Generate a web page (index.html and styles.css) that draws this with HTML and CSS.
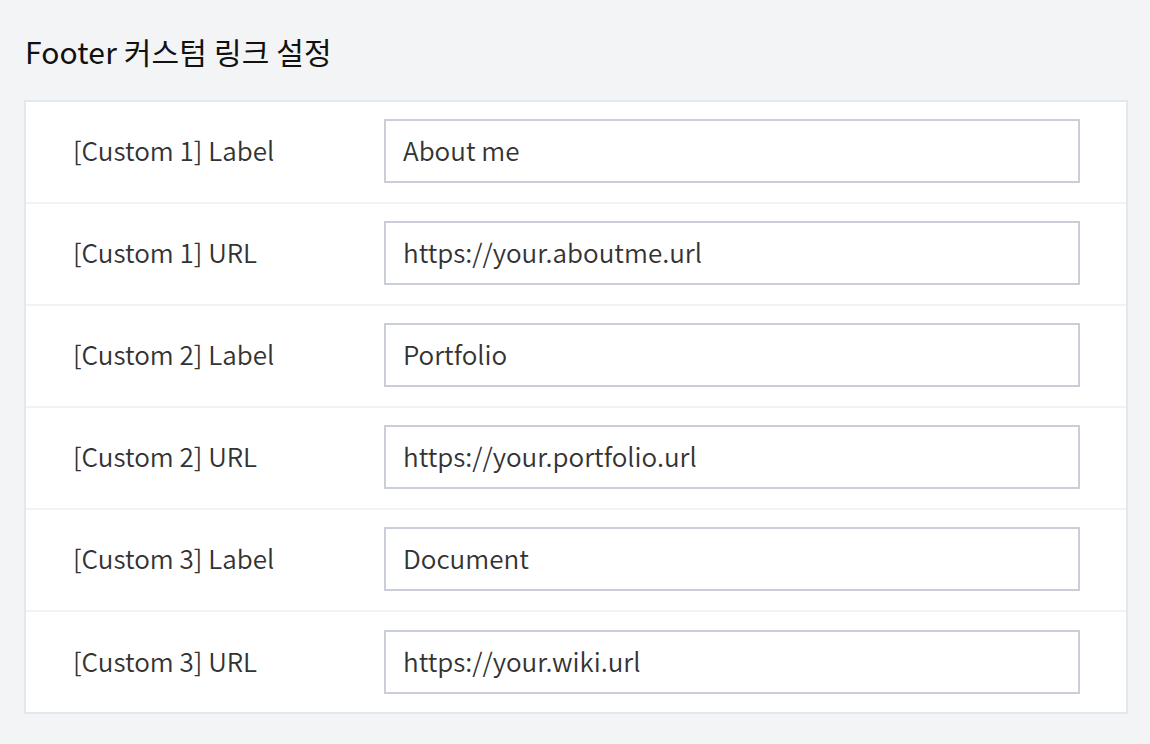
FILE: index.html
```html
<!DOCTYPE html>
<html lang="en">
<head>
<meta charset="utf-8">
<link rel="stylesheet" href="styles.css">
</head>
<body>
<div class="page">
  <h2 class="title">Footer 커스텀 링크 설정</h2>
  <div class="card">
    <div class="row"><div class="label">[Custom 1] Label</div><div class="field">About me</div></div>
    <div class="row"><div class="label">[Custom 1] URL</div><div class="field">https://your.aboutme.url</div></div>
    <div class="row"><div class="label">[Custom 2] Label</div><div class="field">Portfolio</div></div>
    <div class="row"><div class="label">[Custom 2] URL</div><div class="field">https://your.portfolio.url</div></div>
    <div class="row"><div class="label">[Custom 3] Label</div><div class="field">Document</div></div>
    <div class="row"><div class="label">[Custom 3] URL</div><div class="field">https://your.wiki.url</div></div>
  </div>
</div>
</body>
</html>
```
FILE: styles.css
```css
* { box-sizing: border-box; }
html, body { margin: 0; padding: 0; }
body {
  background: #f3f4f6;
  font-family: "Noto Sans CJK KR", "Noto Sans", sans-serif;
  width: 1150px;
  height: 744px;
  overflow: hidden;
}
.page {
  padding: 30px 22px 0 24px;
}
.title {
  margin: 0 0 28px 1px;
  font-size: 30px;
  font-weight: 400;
  line-height: 42px;
  color: #111;
  letter-spacing: 0.15px;
}
.card {
  background: #fff;
  border: 2px solid #e3e7ee;
  width: 1104px;
}
.row {
  display: flex;
  align-items: center;
  height: 102px;
  padding: 0 46px 2px 47px;
  border-bottom: 2px solid #f0f2f6;
}
.row:last-child {
  border-bottom: none;
  height: 100px;
  padding-bottom: 0;
}
.label {
  width: 311px;
  font-size: 26px;
  font-weight: 350;
  color: #333;
  letter-spacing: 0;
  line-height: 1;
  padding-bottom: 2px;
}
.field {
  flex: 1;
  height: 64px;
  border: 2px solid #c9ced8;
  display: flex;
  align-items: center;
  padding: 0 17px 2px;
  font-size: 26px;
  font-weight: 350;
  color: #333;
  letter-spacing: 0;
  line-height: 1;
}
```
